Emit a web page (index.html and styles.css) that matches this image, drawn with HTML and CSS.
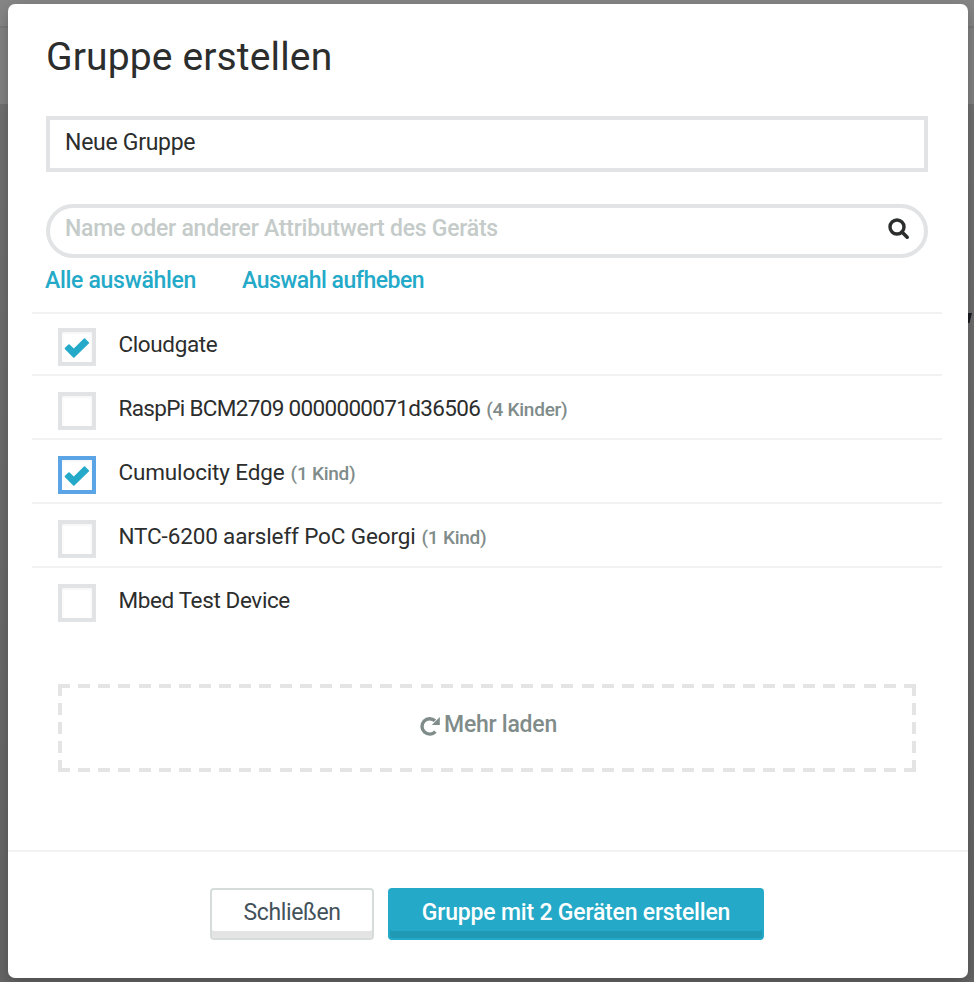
FILE: index.html
```html
<!DOCTYPE html>
<html lang="de">
<head>
<meta charset="utf-8">
<title>Gruppe erstellen</title>
<link rel="stylesheet" href="styles.css">
</head>
<body>
<div class="backdrop">
<main class="modal">
  <section class="content">
    <h1 class="title">Gruppe erstellen</h1>
    <div class="field">Neue Gruppe</div>
    <div class="search"><span>Name oder anderer Attributwert des Geräts</span>
      <svg class="search-icon" viewBox="0 0 22 22"><circle cx="9" cy="9" r="7" fill="none" stroke="currentColor" stroke-width="3.4"/><path d="M14 14l5.2 5.2" stroke="currentColor" stroke-width="3.6" stroke-linecap="round"/></svg>
    </div>
    <nav class="links"><a class="all">Alle auswählen</a><a class="none">Auswahl aufheben</a></nav>
    <ul class="list">
      <li class="row"><i class="box"><svg class="check" viewBox="0 0 26 20"><path d="M1 9.8L4.4 6.5Q5 6 5.6 6.5L9.8 10.6 19.9.6Q20.5 0 21.1.6L24.8 4.2Q25.4 4.8 24.8 5.4L10.4 19.6Q9.8 20.1 9.2 19.6L1 11.2Q.3 10.5 1 9.8z" fill="currentColor"/></svg></i><span class="name short">Cloudgate</span></li>
      <li class="row"><i class="box"></i><span class="name digits">RaspPi BCM2709 0000000071d36506</span><small>(4 Kinder)</small></li>
      <li class="row"><i class="box focus"><svg class="check" viewBox="0 0 26 20"><path d="M1 9.8L4.4 6.5Q5 6 5.6 6.5L9.8 10.6 19.9.6Q20.5 0 21.1.6L24.8 4.2Q25.4 4.8 24.8 5.4L10.4 19.6Q9.8 20.1 9.2 19.6L1 11.2Q.3 10.5 1 9.8z" fill="currentColor"/></svg></i><span class="name">Cumulocity Edge</span><small>(1 Kind)</small></li>
      <li class="row"><i class="box"></i><span class="name">NTC-6200 aarsleff PoC Georgi</span><small>(1 Kind)</small></li>
      <li class="row"><i class="box"></i><span class="name short">Mbed Test Device</span></li>
    </ul>
    <div class="more"><svg class="reload" viewBox="0 0 20 20"><path d="M15.4 15.6A7.7 7.7 0 1 1 15 4.8" fill="none" stroke="currentColor" stroke-width="3.4"/><path d="M19.8 1v8h-8z" fill="currentColor"/></svg><span>Mehr laden</span></div>
  </section>
  <footer class="footer"><button class="btn">Schließen</button><button class="btn primary">Gruppe mit 2 Geräten erstellen</button></footer>
</main>
<svg class="behind" viewBox="0 0 6 14"><path d="M0 1h4L1.5 11H0z" fill="#15181c"/></svg>
</div>
</body>
</html>
```

FILE: styles.css
```css
* { box-sizing: border-box; }
body { margin: 0; font-family: Roboto, "Liberation Sans", sans-serif; font-size: 23px; color: #2c2d2d; }
.backdrop { position: relative; height: 982px; padding: 4px 6px 4px 8px; overflow: hidden; background: linear-gradient(#868686 0 26px, #7a7a7a 26px 28px, #838383 28px 104px, #717171 104px, #666 982px); }
.behind { position: absolute; left: 968px; top: 312px; width: 6px; height: 14px; }
.modal { width: 960px; height: 974px; border-radius: 7px; background: #fff; box-shadow: 0 5px 15px rgba(0,0,0,.25); display: flex; flex-direction: column; }
.content { height: 846px; padding: 0 40px 0 38px; display: flex; flex-direction: column; }
.title { margin: 0; height: 112px; padding-top: 30px; font-size: 39px; line-height: 46px; font-weight: 400; letter-spacing: .14px; }
.field, .search { height: 56px; border: 4px solid #e1e3e4; padding: 0 15px; display: flex; line-height: 46px; letter-spacing: -.28px; }
.search { height: 54px; margin-top: 32px; border-radius: 27px; justify-content: space-between; color: #c4cbc9; font-weight: 500; line-height: 42px; padding-right: 14px; letter-spacing: -.25px; }
.search-icon { width: 22px; height: 22px; margin-top: 10px; color: #2c2d2d; }
.links { height: 54px; margin-left: -1px; display: flex; line-height: 46px; color: #24aac8; font-weight: 500; }
.all { width: 197px; letter-spacing: -.3px; }
.none { letter-spacing: -.5px; }
.list { list-style: none; margin: 0 -14px; padding: 0; }
.row { height: 64px; padding: 16px 0 0 26px; border-bottom: 2px solid #f2f2f2; display: flex; line-height: 32px; white-space: nowrap; align-items: baseline; }
.row:first-child { border-top: 2px solid #f2f2f2; padding-top: 14px; }
.row:last-child { border-bottom: 0; }
.name { font-size: 22.5px; letter-spacing: -.14px; }
.short { letter-spacing: -.38px; }
.digits { letter-spacing: -.67px; }
.box { width: 38px; height: 38px; border: 4px solid #e1e3e4; box-shadow: inset 0 1px 3px rgba(0,0,0,.06); margin-right: 22.5px; align-self: flex-start; }
.focus { border-color: #5ba4e6; }
.check { display: block; width: 26px; height: 20px; margin: 6px 0 0 2px; color: #24aac8; }
small { font-size: 19px; font-weight: 500; color: #7f8c8a; margin-left: 6px; letter-spacing: -.25px; }
.more { height: 88px; margin: 52px 12px 0; display: flex; justify-content: center; padding-left: 3px; line-height: 82px; color: #7f8c8a; font-weight: 500; letter-spacing: -.25px;
  background: repeating-linear-gradient(90deg, #e4e4e4 0 12px, transparent 12px 20.14px) top / 100% 4px no-repeat, repeating-linear-gradient(90deg, #e4e4e4 0 12px, transparent 12px 20.14px) bottom / 100% 4px no-repeat, repeating-linear-gradient(#e4e4e4 0 12px, transparent 12px 19px) left / 4px 100% no-repeat, repeating-linear-gradient(#e4e4e4 0 12px, transparent 12px 19px) right / 4px 100% no-repeat; }
.reload { width: 20px; height: 20px; margin: 32px 4px 0 0; }
.footer { flex: 1; border-top: 2px solid #f2f2f2; display: flex; padding: 36px 0 0 202px; gap: 14px; }
.btn { width: 164px; height: 52px; border: 2px solid #d5dcda; border-radius: 4px; background: #fff; box-shadow: inset 0 -7px #e4e4e4; font: inherit; line-height: 44px; padding: 0 0 2px; color: #43525a; white-space: nowrap; letter-spacing: -.35px; }
.primary { width: 376px; border-color: #24aac8; background: #24aac8; box-shadow: inset 0 -7px #2099b4; color: #fff; font-weight: 500; letter-spacing: -.2px; }
```
